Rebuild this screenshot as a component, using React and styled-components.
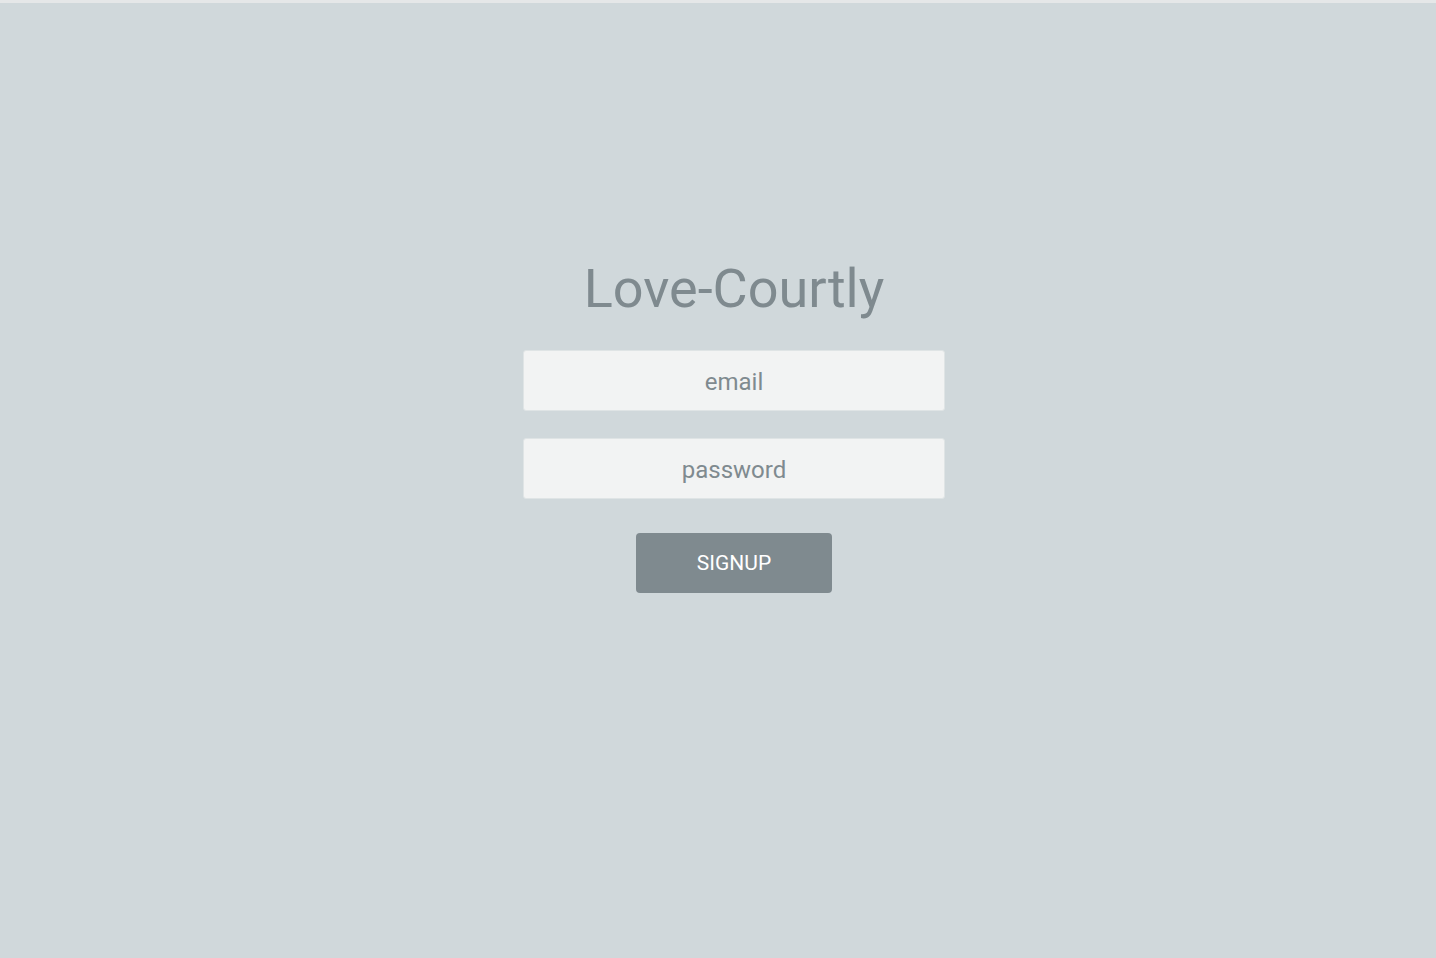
import React from "react";
import styled, { createGlobalStyle } from "styled-components";

const GlobalStyle = createGlobalStyle`
  html, body {
    margin: 0;
    padding: 0;
    height: 100%;
  }
  body {
    background: #d0d8db;
    font-family: Roboto, "Liberation Sans", sans-serif;
  }
  #root {
    min-height: 100vh;
  }
`;

const Page = styled.div`
  min-height: 100vh;
  box-sizing: border-box;
  border-top: 3px solid #e5e7e8;
  background: #d0d8db;
  display: flex;
  flex-direction: column;
  align-items: center;
  padding: 251px 0 0 32px;
`;

const Title = styled.h1`
  margin: 0 0 26px;
  font-size: 54px;
  font-weight: 400;
  line-height: 70px;
  color: #7f8a8f;
  text-align: center;
`;

const Form = styled.form`
  display: flex;
  flex-direction: column;
  align-items: center;
  gap: 27px;
`;

const Input = styled.input`
  width: 422px;
  height: 61px;
  box-sizing: border-box;
  padding: 2px 0 0;
  background: #f2f3f3;
  border: 1px solid #dfe4e5;
  border-radius: 3px;
  text-align: center;
  font-family: Roboto, "Liberation Sans", sans-serif;
  font-size: 24px;
  color: #7f8a8f;
  outline: none;

  &::placeholder {
    color: #7f8a8f;
  }
`;

const Button = styled.button`
  margin-top: 7px;
  width: 196px;
  height: 60px;
  border: none;
  border-radius: 4px;
  background: #7f8a8f;
  color: #ffffff;
  font-family: Roboto, "Liberation Sans", sans-serif;
  font-size: 21px;
  text-transform: uppercase;
  cursor: pointer;
`;

export default function App() {
  return (
    <>
      <GlobalStyle />
      <Page>
        <Title>Love-Courtly</Title>
        <Form onSubmit={(e) => e.preventDefault()}>
          <Input type="email" placeholder="email" />
          <Input type="password" placeholder="password" />
          <Button type="submit">Signup</Button>
        </Form>
      </Page>
    </>
  );
}
